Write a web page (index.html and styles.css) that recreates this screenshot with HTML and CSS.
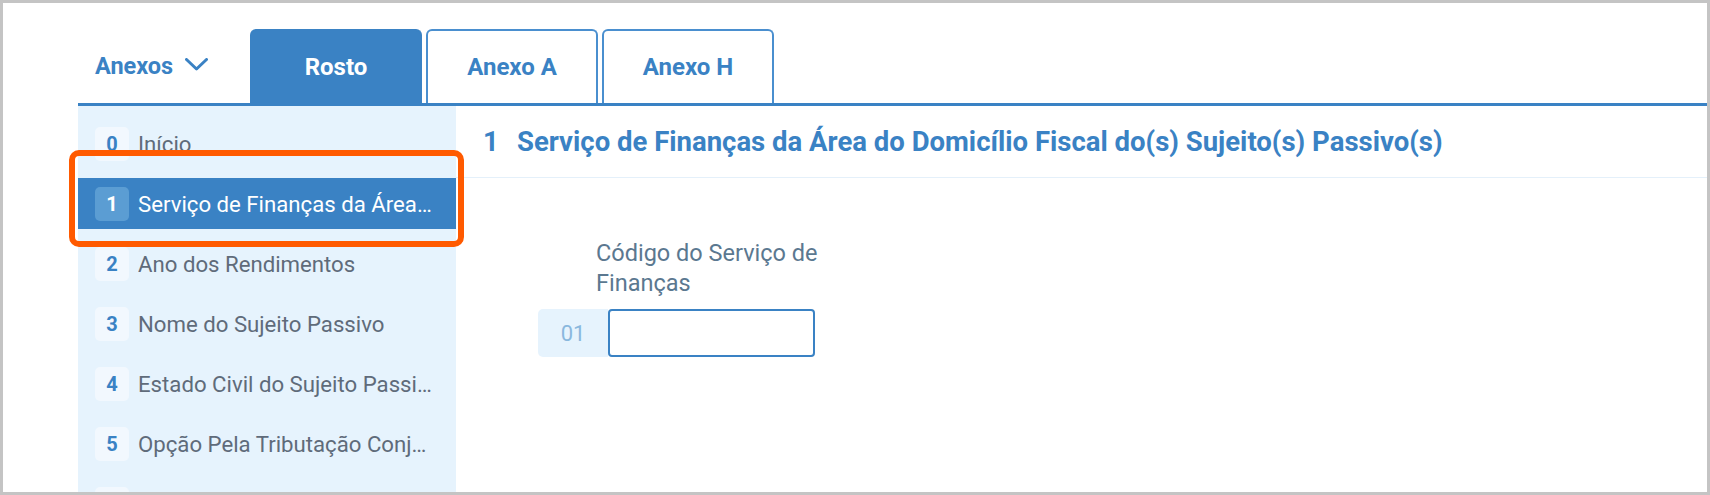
FILE: index.html
```html
<!DOCTYPE html>
<html lang="pt">
<head>
<meta charset="utf-8">
<title>Rosto</title>
<link rel="stylesheet" href="styles.css">
</head>
<body>
<div class="frame">
  <div class="app">
    <div class="tabbar">
      <button class="annex-toggle">Anexos
        <svg class="chev" width="23" height="13" viewBox="0 0 23 13"><path d="M1.5 1.5 L11.5 11 L21.5 1.5" fill="none" stroke="#3a82c4" stroke-width="3" stroke-linecap="round" stroke-linejoin="round"/></svg>
      </button>
      <div class="tab active">Rosto</div>
      <div class="tab">Anexo A</div>
      <div class="tab">Anexo H</div>
    </div>
    <div class="body">
      <nav class="sidebar">
        <div class="item"><span class="num">0</span><span class="label">Início</span></div>
        <div class="item active"><span class="num">1</span><span class="label">Serviço de Finanças da Área do Domicílio Fiscal</span></div>
        <div class="item"><span class="num">2</span><span class="label">Ano dos Rendimentos</span></div>
        <div class="item"><span class="num">3</span><span class="label">Nome do Sujeito Passivo</span></div>
        <div class="item"><span class="num">4</span><span class="label">Estado Civil do Sujeito Passivo</span></div>
        <div class="item"><span class="num">5</span><span class="label">Opção Pela Tributação Conjunta</span></div>
        <div class="item"><span class="num">6</span><span class="label">Identificação dos Dependentes</span></div>
        <div class="highlight"></div>
      </nav>
      <main class="main">
        <h1 class="section-title"><span class="sec-num">1</span>Serviço de Finanças da Área do Domicílio Fiscal do(s) Sujeito(s) Passivo(s)</h1>
        <div class="form">
          <div class="field">
            <div class="field-label">Código do Serviço de<br>Finanças</div>
            <div class="field-row">
              <span class="field-code">01</span>
              <input class="field-input" type="text">
            </div>
          </div>
        </div>
      </main>
    </div>
  </div>
</div>
</body>
</html>
```
FILE: styles.css
```css
* { box-sizing: border-box; }
html, body { margin: 0; padding: 0; }
body {
  font-family: Roboto, "Liberation Sans", sans-serif;
  background: #ffffff;
}
.frame {
  width: 1710px;
  height: 495px;
  border: 3px solid #c4c4c4;
  overflow: hidden;
  background: #fff;
}
.app {
  margin-left: 75px;
  display: flex;
  flex-direction: column;
  height: 100%;
}
.tabbar {
  display: flex;
  align-items: flex-end;
  height: 103px;
  padding-top: 26px;
  border-bottom: 3px solid #3a82c4;
  gap: 4px;
}
.annex-toggle {
  width: 168px;
  height: 100%;
  background: none;
  border: 0;
  padding: 0 0 0 17px;
  display: flex;
  align-items: center;
  gap: 12px;
  font-family: inherit;
  font-size: 23.5px;
  font-weight: 700;
  color: #3a82c4;
  cursor: pointer;
}
.chev { margin-top: -4px; }
.tab {
  width: 172px;
  height: 100%;
  display: flex;
  align-items: center;
  justify-content: center;
  border: 2px solid #4a8fcf;
  border-bottom: 0;
  border-radius: 6px 6px 0 0;
  font-size: 24px;
  font-weight: 700;
  color: #3a82c4;
  background: #fff;
}
.tab.active {
  background: #3a82c4;
  border-color: #3a82c4;
  color: #fff;
}
.body {
  display: flex;
  flex: 1;
  min-height: 0;
}
.sidebar {
  position: relative;
  width: 378px;
  flex: none;
  background: #e6f3fd;
  padding-top: 12px;
  display: flex;
  flex-direction: column;
  gap: 9px;
}
.item {
  height: 51px;
  flex: none;
  display: flex;
  align-items: center;
  padding: 0 20px 0 17px;
  gap: 9px;
  color: #5f6b7a;
  font-size: 22.2px;
}
.num {
  width: 34px;
  height: 34px;
  flex: none;
  border-radius: 5px;
  background: #f2f8fe;
  color: #3a82c4;
  font-weight: 700;
  font-size: 20px;
  display: flex;
  align-items: center;
  justify-content: center;
}
.label {
  white-space: nowrap;
  overflow: hidden;
  text-overflow: ellipsis;
  min-width: 0;
}
.item.active {
  background: #3a82c4;
  color: #fff;
}
.item.active .label {
  margin-right: 3px;
}
.item.active .num {
  background: #5b9dd3;
  color: #fff;
}
.highlight {
  position: absolute;
  left: -9px;
  top: 44px;
  width: 395px;
  height: 97px;
  border: 6px solid #ff5a00;
  border-radius: 10px;
  pointer-events: none;
}
.main {
  flex: 1;
  min-width: 0;
  display: flex;
  flex-direction: column;
}
.section-title {
  margin: 0;
  height: 72px;
  flex: none;
  display: flex;
  align-items: center;
  padding-left: 27px;
  border-bottom: 1px solid #e4f0fa;
  font-size: 27.5px;
  font-weight: 700;
  color: #3a82c4;
  white-space: nowrap;
}
.sec-num {
  width: 34px;
  flex: none;
}
.form {
  padding: 60px 0 0 82px;
}
.field {
  display: flex;
  flex-direction: column;
  gap: 11px;
}
.field-label {
  margin-left: 58px;
  font-size: 23.5px;
  line-height: 30px;
  color: #5b7890;
}
.field-row {
  display: flex;
  height: 48px;
}
.field-code {
  width: 70px;
  background: #e6f3fd;
  border-radius: 5px 0 0 5px;
  color: #8ab8de;
  font-size: 22px;
  display: flex;
  align-items: center;
  justify-content: center;
}
.field-input {
  width: 207px;
  height: 48px;
  border: 2px solid #3a82c4;
  border-radius: 4px;
  background: #fff;
  outline: none;
  font-family: inherit;
  font-size: 19px;
  padding: 0 10px;
}
```
